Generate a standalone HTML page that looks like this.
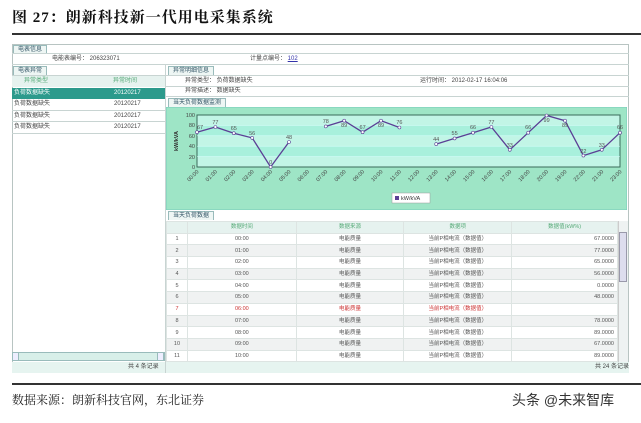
<!DOCTYPE html>
<html><head><meta charset="utf-8"><style>
*{margin:0;padding:0;box-sizing:border-box}
body{width:641px;height:423px;background:#fff;position:relative;overflow:hidden;font-family:"Liberation Sans","Noto Sans CJK SC",sans-serif;font-size:6px;line-height:7px;color:#444}
.a{position:absolute}
.tab{position:absolute;height:9px;border:1px solid #9bb;border-bottom:none;background:#eef6f4;color:#356;font-size:6px;line-height:8px;padding:0 4px}
.ln{position:absolute;background:#c8d4d2}
table{border-collapse:collapse;position:absolute;font-size:5.5px;line-height:6px}
td{border:1px solid #dde4e2;text-align:center;height:11.7px;padding:0 3px;white-space:nowrap}
</style></head><body>
<div class="a" style="left:12px;top:9px;line-height:18px;font-family:'Liberation Serif','Noto Serif CJK SC',serif;font-weight:bold;font-size:15px;color:#111;letter-spacing:1px">图 27：朗新科技新一代用电采集系统</div>
<div class="a" style="left:12px;top:33px;width:629px;height:2px;background:#333"></div>

<div class="a" style="left:12px;top:44px;width:617px;height:329px;border:1px solid #b8c4c2;background:#fff"></div>
<div class="tab" style="left:13px;top:45px">电表信息</div>
<div class="ln" style="left:12px;top:53px;width:617px;height:1px"></div>
<div class="a" style="left:52px;top:56px">电能表编号：&nbsp;206323071</div>
<div class="a" style="left:250px;top:56px">计量点编号：&nbsp;<span style="color:#33a;text-decoration:underline">102</span></div>
<div class="ln" style="left:12px;top:64px;width:617px;height:1px"></div>

<div class="tab" style="left:13px;top:66px">电表异常</div>
<div class="ln" style="left:12px;top:75px;width:153px;height:1px"></div>
<div class="a" style="left:12px;top:76px;width:153px;height:11px;background:#e6f2ef"></div>
<div class="a" style="left:24px;top:78px;color:#5a7">异常类型</div>
<div class="a" style="left:113px;top:78px;color:#5a7">异常时间</div>
<div class="a" style="left:12px;top:88px;width:153px;height:11px;background:#2c9a8c;color:#fff"><span style="position:absolute;left:2px;top:2px">负荷数据缺失</span><span style="position:absolute;left:102px;top:2px">20120217</span></div>
<div class="a" style="left:14px;top:101px">负荷数据缺失</div><div class="a" style="left:114px;top:101px">20120217</div>
<div class="a" style="left:14px;top:113px">负荷数据缺失</div><div class="a" style="left:114px;top:113px">20120217</div>
<div class="a" style="left:14px;top:124px">负荷数据缺失</div><div class="a" style="left:114px;top:124px">20120217</div>
<div class="ln" style="left:12px;top:110px;width:153px;height:1px"></div>
<div class="ln" style="left:12px;top:121px;width:153px;height:1px"></div>
<div class="ln" style="left:12px;top:133px;width:153px;height:1px"></div>
<div class="a" style="left:12px;top:352px;width:153px;height:9px;background:#d8efe9;border:1px solid #9bb"></div>
<div class="a" style="left:12px;top:352px;width:7px;height:9px;background:#eef;border:1px solid #9bb"></div>
<div class="a" style="left:157px;top:352px;width:7px;height:9px;background:#eef;border:1px solid #9bb"></div>
<div class="a" style="left:12px;top:362px;width:617px;height:11px;background:#e6f4f0"></div>
<div class="a" style="left:128px;top:364px">共 4 条记录</div>
<div class="a" style="left:595px;top:364px">共 24 条记录</div>
<div class="ln" style="left:165px;top:64px;width:1px;height:309px"></div>

<div class="tab" style="left:168px;top:66px">异常明细信息</div>
<div class="ln" style="left:166px;top:75px;width:463px;height:1px"></div>
<div class="a" style="left:185px;top:78px">异常类型：&nbsp;负荷数据缺失</div>
<div class="a" style="left:185px;top:88px">异常描述：&nbsp;数据缺失</div>
<div class="a" style="left:420px;top:78px">运行时间：&nbsp;2012-02-17 16:04:06</div>
<div class="ln" style="left:166px;top:86px;width:463px;height:1px"></div>
<div class="ln" style="left:166px;top:96px;width:463px;height:1px"></div>

<div class="tab" style="left:168px;top:98px">当天负荷数据监测</div>
<svg class="a" style="left:166px;top:107px" width="461" height="103" viewBox="166 107 461 103">
<rect x="166" y="107" width="461" height="103" fill="#9ee5c6" stroke="#7cb" />
<rect x="197" y="115" width="423" height="52" fill="#c2f5e6" stroke="#3a6a5a" stroke-width="1"/>
<g fill="#a8f0dc"><rect x="197.5" y="125.4" width="422" height="10.4"/><rect x="197.5" y="146.2" width="422" height="10.4"/></g>
<g stroke="#dff" stroke-width=".5"><line x1="197" y1="125.4" x2="620" y2="125.4"/><line x1="197" y1="135.8" x2="620" y2="135.8"/><line x1="197" y1="146.2" x2="620" y2="146.2"/><line x1="197" y1="156.6" x2="620" y2="156.6"/></g>
<g font-size="5.5" fill="#444" text-anchor="end" font-family="Liberation Sans">
<text x="195" y="117">100</text><text x="195" y="127">80</text><text x="195" y="138">60</text><text x="195" y="148">40</text><text x="195" y="159">20</text><text x="195" y="169">0</text></g>
<text x="178" y="141" font-size="5.5" font-weight="bold" fill="#333" transform="rotate(-90 178 141)" text-anchor="middle">kW/kVA</text>
<g fill="none" stroke="#5b3f95" stroke-width="1.3">
<polyline points="197,132.2 215.4,127 233.8,133.2 252.2,137.9 270.6,167 289,142"/>
<polyline points="325.8,126.4 344.2,120.7 362.6,132.2 381,120.7 399.4,127.5"/>
<polyline points="436.2,144.1 454.6,138.4 473,132.7 491.4,127 509.8,149.8 528.2,132.7 546.6,115.5 565,120.7 583.4,155.6 601.8,149.8 620,132.7"/></g>
<g fill="#fff" stroke="#5b3f95" stroke-width=".6">
<circle cx="197" cy="132.2" r="1.5"/><circle cx="215.4" cy="127" r="1.5"/><circle cx="233.8" cy="133.2" r="1.5"/><circle cx="252.2" cy="137.9" r="1.5"/><circle cx="270.6" cy="167" r="1.5"/><circle cx="289" cy="142" r="1.5"/>
<circle cx="325.8" cy="126.4" r="1.5"/><circle cx="344.2" cy="120.7" r="1.5"/><circle cx="362.6" cy="132.2" r="1.5"/><circle cx="381" cy="120.7" r="1.5"/><circle cx="399.4" cy="127.5" r="1.5"/>
<circle cx="436.2" cy="144.1" r="1.5"/><circle cx="454.6" cy="138.4" r="1.5"/><circle cx="473" cy="132.7" r="1.5"/><circle cx="491.4" cy="127" r="1.5"/><circle cx="509.8" cy="149.8" r="1.5"/><circle cx="528.2" cy="132.7" r="1.5"/><circle cx="546.6" cy="115.5" r="1.5"/><circle cx="565" cy="120.7" r="1.5"/><circle cx="583.4" cy="155.6" r="1.5"/><circle cx="601.8" cy="149.8" r="1.5"/><circle cx="620" cy="132.7" r="1.5"/></g>
<g font-size="5.5" fill="#555" text-anchor="middle" font-family="Liberation Sans">
<text x="200" y="129">67</text><text x="215.4" y="124">77</text><text x="233.8" y="130">65</text><text x="252.2" y="135">56</text><text x="270.6" y="164">0</text><text x="289" y="139">48</text>
<text x="325.8" y="123">78</text><text x="344.2" y="127">89</text><text x="362.6" y="129">67</text><text x="381" y="127">89</text><text x="399.4" y="124">76</text>
<text x="436.2" y="141">44</text><text x="454.6" y="135">55</text><text x="473" y="129">66</text><text x="491.4" y="124">77</text><text x="509.8" y="147">33</text><text x="528.2" y="129">66</text><text x="546.6" y="122">99</text><text x="565" y="127">89</text><text x="583.4" y="153">22</text><text x="601.8" y="147">33</text><text x="620" y="129">66</text></g>
<g font-size="5.5" fill="#444" text-anchor="end" font-family="Liberation Sans">
<text transform="translate(199,172) rotate(-45)">00:00</text><text transform="translate(217.4,172) rotate(-45)">01:00</text><text transform="translate(235.8,172) rotate(-45)">02:00</text><text transform="translate(254.2,172) rotate(-45)">03:00</text><text transform="translate(272.6,172) rotate(-45)">04:00</text><text transform="translate(291,172) rotate(-45)">05:00</text><text transform="translate(309.4,172) rotate(-45)">06:00</text><text transform="translate(327.8,172) rotate(-45)">07:00</text><text transform="translate(346.2,172) rotate(-45)">08:00</text><text transform="translate(364.6,172) rotate(-45)">09:00</text><text transform="translate(383,172) rotate(-45)">10:00</text><text transform="translate(401.4,172) rotate(-45)">11:00</text><text transform="translate(419.8,172) rotate(-45)">12:00</text><text transform="translate(438.2,172) rotate(-45)">13:00</text><text transform="translate(456.6,172) rotate(-45)">14:00</text><text transform="translate(475,172) rotate(-45)">15:00</text><text transform="translate(493.4,172) rotate(-45)">16:00</text><text transform="translate(511.8,172) rotate(-45)">17:00</text><text transform="translate(530.2,172) rotate(-45)">18:00</text><text transform="translate(548.6,172) rotate(-45)">20:00</text><text transform="translate(567,172) rotate(-45)">19:00</text><text transform="translate(585.4,172) rotate(-45)">22:00</text><text transform="translate(603.8,172) rotate(-45)">21:00</text><text transform="translate(622,172) rotate(-45)">23:00</text></g>
<rect x="392" y="193" width="38" height="10" fill="#fff" stroke="#999" stroke-width=".5"/>
<rect x="395" y="196" width="4" height="4" fill="#5b3f95"/>
<text x="401" y="200" font-size="5.5" fill="#333" font-family="Liberation Sans">kW/kVA</text>
</svg>

<div class="tab" style="left:168px;top:211px">当天负荷数据</div>
<table style="left:166px;top:221px;width:452px;color:#555">
<tr style="background:#e6f2ef;color:#5a7"><td style="width:21px"></td><td style="width:109px">数据时间</td><td style="width:108px">数据来源</td><td style="width:108px">数据项</td><td style="width:106px">数据值(kW%)</td></tr>
<tr><td>1</td><td>00:00</td><td>电能质量</td><td>当前P相电流（数据值）</td><td style="text-align:right">67.0000</td></tr>
<tr style="background:#f0f2f2"><td>2</td><td>01:00</td><td>电能质量</td><td>当前P相电流（数据值）</td><td style="text-align:right">77.0000</td></tr>
<tr><td>3</td><td>02:00</td><td>电能质量</td><td>当前P相电流（数据值）</td><td style="text-align:right">65.0000</td></tr>
<tr style="background:#f0f2f2"><td>4</td><td>03:00</td><td>电能质量</td><td>当前P相电流（数据值）</td><td style="text-align:right">56.0000</td></tr>
<tr><td>5</td><td>04:00</td><td>电能质量</td><td>当前P相电流（数据值）</td><td style="text-align:right">0.0000</td></tr>
<tr style="background:#f0f2f2"><td>6</td><td>05:00</td><td>电能质量</td><td>当前P相电流（数据值）</td><td style="text-align:right">48.0000</td></tr>
<tr style="color:#c33"><td>7</td><td>06:00</td><td>电能质量</td><td>当前P相电流（数据值）</td><td></td></tr>
<tr style="background:#f0f2f2"><td>8</td><td>07:00</td><td>电能质量</td><td>当前P相电流（数据值）</td><td style="text-align:right">78.0000</td></tr>
<tr><td>9</td><td>08:00</td><td>电能质量</td><td>当前P相电流（数据值）</td><td style="text-align:right">89.0000</td></tr>
<tr style="background:#f0f2f2"><td>10</td><td>09:00</td><td>电能质量</td><td>当前P相电流（数据值）</td><td style="text-align:right">67.0000</td></tr>
<tr><td>11</td><td>10:00</td><td>电能质量</td><td>当前P相电流（数据值）</td><td style="text-align:right">89.0000</td></tr>
</table>
<div class="a" style="left:618px;top:221px;width:10px;height:141px;background:#eef2f2;border-left:1px solid #ccc"></div>
<div class="a" style="left:619px;top:232px;width:8px;height:50px;background:#dde;border:1px solid #99a"></div>

<div class="a" style="left:12px;top:383px;width:629px;height:2px;background:#333"></div>
<div class="a" style="left:12px;top:393px;line-height:15px;font-family:'Liberation Serif','Noto Serif CJK SC',serif;font-size:12px;color:#222">数据来源：朗新科技官网，东北证券</div>
<div class="a" style="left:512px;top:392px;line-height:17px;font-size:14px;color:#333">头条 @未来智库</div>
</body></html>
